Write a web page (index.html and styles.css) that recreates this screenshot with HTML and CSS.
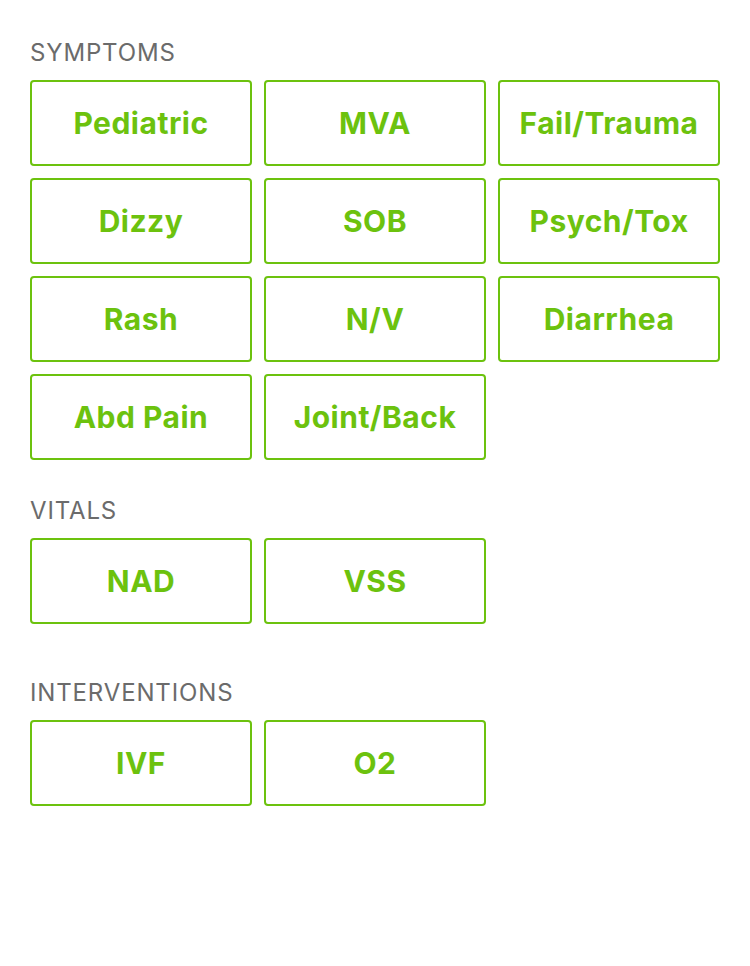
FILE: index.html
```html
<!DOCTYPE html>
<html>
<head>
<meta charset="utf-8">
<link rel="stylesheet" href="styles.css">
</head>
<body>
<div class="page">
  <section class="section sec-symptoms">
    <h2 class="label">SYMPTOMS</h2>
    <div class="grid">
      <button class="btn">Pediatric</button>
      <button class="btn">MVA</button>
      <button class="btn">Fail/Trauma</button>
      <button class="btn">Dizzy</button>
      <button class="btn">SOB</button>
      <button class="btn">Psych/Tox</button>
      <button class="btn">Rash</button>
      <button class="btn">N/V</button>
      <button class="btn">Diarrhea</button>
      <button class="btn">Abd Pain</button>
      <button class="btn">Joint/Back</button>
    </div>
  </section>
  <section class="section sec-vitals">
    <h2 class="label">VITALS</h2>
    <div class="grid">
      <button class="btn">NAD</button>
      <button class="btn">VSS</button>
    </div>
  </section>
  <section class="section sec-interventions">
    <h2 class="label">INTERVENTIONS</h2>
    <div class="grid">
      <button class="btn">IVF</button>
      <button class="btn">O2</button>
    </div>
  </section>
</div>
</body>
</html>
```
FILE: styles.css
```css
html, body {
  margin: 0;
  padding: 0;
  background: #ffffff;
}
.page {
  padding: 38px 30px 0 30px;
  font-family: "Inter", "Roboto", "Liberation Sans", sans-serif;
}
.section {
  margin: 0;
}
.sec-vitals {
  margin-top: 36px;
}
.sec-interventions {
  margin-top: 54px;
}
.label {
  margin: 0 0 13px 0;
  padding-top: 1px;
  font-size: 24px;
  line-height: 28px;
  font-weight: 400;
  color: #6b6b6b;
  letter-spacing: 0.85px;
}
.grid {
  display: grid;
  grid-template-columns: repeat(3, 222px);
  grid-auto-rows: 86px;
  gap: 12px;
}
.btn {
  display: flex;
  align-items: center;
  justify-content: center;
  box-sizing: border-box;
  border: 2px solid #6cc20e;
  border-radius: 4px;
  background: #ffffff;
  color: #6cc20e;
  font-family: inherit;
  font-size: 30px;
  font-weight: 700;
  letter-spacing: 0.5px;
  padding: 0;
  margin: 0;
}
```
